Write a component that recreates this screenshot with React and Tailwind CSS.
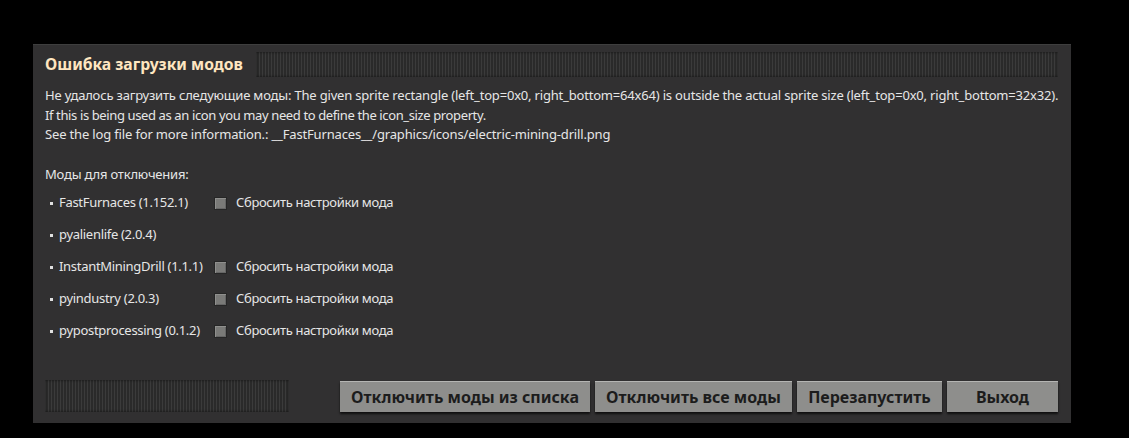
const mods = [
  { name: "FastFurnaces (1.152.1)", reset: true },
  { name: "pyalienlife (2.0.4)", reset: false },
  { name: "InstantMiningDrill (1.1.1)", reset: true },
  { name: "pyindustry (2.0.3)", reset: true },
  { name: "pypostprocessing (0.1.2)", reset: true },
];

const buttons = [
  { label: "Отключить моды из списка", width: "w-[250px]" },
  { label: "Отключить все моды", width: "w-[197px]" },
  { label: "Перезапустить", width: "w-[145px]" },
  { label: "Выход", width: "w-[111px]" },
];

const Dragger = ({ className }) => (
  <div
    className={
      "bg-[repeating-linear-gradient(90deg,#3b3b3b_0px,#3b3b3b_1px,#2a2a2a_1px,#2a2a2a_3px)] shadow-[inset_0_0_3px_rgba(0,0,0,0.6)] " +
      className
    }
  />
);

const ModRow = ({ mod }) => (
  <div className="flex items-center h-[32px]">
    <div className="w-[169px] flex items-center tracking-[-0.3px]">
      <span className="w-[3px] h-[3px] bg-[#e0e0e0] ml-[5px] mr-[6px]" />
      <span>{mod.name}</span>
    </div>
    {mod.reset && (
      <div className="flex items-center">
        <span className="w-[13px] h-[13px] bg-[#7a7a78] border border-[#262626] shadow-[inset_1px_1px_0_#8f8f8d,inset_-1px_-1px_0_#666]" />
        <span className="ml-[9px] tracking-[-0.35px]">Сбросить настройки мода</span>
      </div>
    )}
  </div>
);

const App = () => {
  return (
    <div className="w-[1129px] h-[438px] bg-black pt-[44px] pl-[33px] font-['Noto_Sans',sans-serif]">
      <div className="w-[1038px] h-[379px] bg-[#313031] flex flex-col pt-[7px] pl-[12px] pr-[13px] pb-[11px] text-[13px] text-[#e6e6e6] border-t border-[#3e3e3e]">
        {/* Title bar */}
        <div className="flex items-center h-[25px]">
          <h2 className="text-[15.7px] font-bold text-[#ffe6c0] leading-none whitespace-nowrap">Ошибка загрузки модов</h2>
          <Dragger className="flex-1 h-[25px] ml-[13px]" />
        </div>

        {/* Message */}
        <div className="mt-[9px] leading-[19.5px] whitespace-nowrap">
          <p className="tracking-[-0.185px]">
            Не удалось загрузить следующие моды: The given sprite rectangle (left_top=0x0, right_bottom=64x64) is outside the actual sprite size (left_top=0x0, right_bottom=32x32).
          </p>
          <p className="tracking-[-0.38px]">If this is being used as an icon you may need to define the icon_size property.</p>
          <p className="tracking-[-0.16px]">See the log file for more information.: __FastFurnaces__/graphics/icons/electric-mining-drill.png</p>
        </div>

        <p className="mt-[20px] tracking-[-0.2px]">Моды для отключения:</p>
        <div className="mt-[3px]">
          {mods.map((m) => (
            <ModRow key={m.name} mod={m} />
          ))}
        </div>

        {/* Footer */}
        <div className="mt-auto flex items-center h-[32px]">
          <Dragger className="w-[244px] h-[32px]" />
          <div className="ml-auto flex gap-[5px]">
            {buttons.map((b) => (
              <button
                key={b.label}
                className={
                  b.width +
                  " h-[31px] bg-[#8e8e8c] text-[#1c1c1c] text-[16px] font-bold border-t border-[#b5b5b3] shadow-[0_2px_2px_rgba(0,0,0,0.7)]"
                }
              >
                {b.label}
              </button>
            ))}
          </div>
        </div>
      </div>
    </div>
  );
};

export default App;
